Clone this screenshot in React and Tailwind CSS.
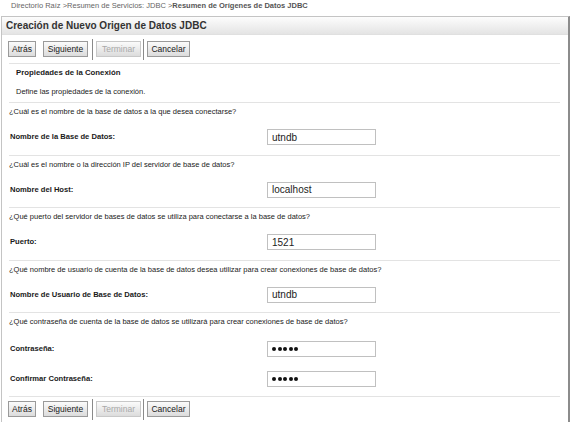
const FIELDS = [
  {
    question: "¿Cuál es el nombre de la base de datos a la que desea conectarse?",
    rows: [{ label: "Nombre de la Base de Datos:", value: "utndb" }],
  },
  {
    question: "¿Cuál es el nombre o la dirección IP del servidor de base de datos?",
    rows: [{ label: "Nombre del Host:", value: "localhost" }],
  },
  {
    question: "¿Qué puerto del servidor de bases de datos se utiliza para conectarse a la base de datos?",
    rows: [{ label: "Puerto:", value: "1521" }],
  },
  {
    question:
      "¿Qué nombre de usuario de cuenta de la base de datos desea utilizar para crear conexiones de base de datos?",
    rows: [{ label: "Nombre de Usuario de Base de Datos:", value: "utndb" }],
  },
  {
    question:
      "¿Qué contraseña de cuenta de la base de datos se utilizará para crear conexiones de base de datos?",
    rows: [
      { label: "Contraseña:", password: true },
      { label: "Confirmar Contraseña:", password: true },
    ],
  },
];

function Btn({ children, disabled, w }) {
  return (
    <div
      className={`${w} h-[16px] flex items-center justify-center border text-[8.5px] leading-none bg-gradient-to-b from-[#fbfbfb] to-[#dcdcdc] ${
        disabled ? "border-[#c8c8c8] text-[#a8a8a8]" : "border-[#9a9a9a] text-[#1a1a1a]"
      }`}
    >
      {children}
    </div>
  );
}

function ButtonBar() {
  return (
    <div className="flex items-center pl-[6px] h-[22px]">
      <Btn w="w-[28px]">Atrás</Btn>
      <div className="w-[7px]" />
      <Btn w="w-[45px]">Siguiente</Btn>
      <div className="w-px h-[21px] bg-[#8a8a8a] ml-[4px] mr-[3px]" />
      <Btn w="w-[45px]" disabled>
        Terminar
      </Btn>
      <div className="w-px h-[21px] bg-[#8a8a8a] ml-[2px] mr-[3px]" />
      <Btn w="w-[43px]">Cancelar</Btn>
    </div>
  );
}

function Rule() {
  return <div className="ml-[7px] mr-[8px] h-px bg-[#e3e3e3]" />;
}

function Dots() {
  return (
    <div className="flex gap-[1.5px]">
      {[0, 1, 2, 3, 4].map((d) => (
        <span key={d} className="w-[4px] h-[4px] rounded-full bg-[#111]" />
      ))}
    </div>
  );
}

export default function App() {
  return (
    <div className="w-[572px] h-[422px] overflow-hidden bg-white text-[#222] font-['Liberation_Sans',Arial,sans-serif]">
      {/* breadcrumb */}
      <div className="h-[16px] pl-[11px] pt-[1px] text-[7.5px] leading-[9px] text-[#666]">
        Directorio Raíz &gt;Resumen de Servicios: JDBC &gt;
        <span className="font-bold text-[#555]">Resumen de Orígenes de Datos JDBC</span>
      </div>

      <div className="ml-px w-[569px] h-[406px] border-l border-t border-[#c4c4c4] border-r-2 border-r-[#8c8c8c]">
        <div className="h-[18px] pl-[4px] flex items-center bg-gradient-to-b from-[#fdfdfd] to-[#e4e4e4] border-b border-[#e0e0e0] text-[10px] font-bold text-[#333]">
          Creación de Nuevo Origen de Datos JDBC
        </div>

        <div className="pt-[3px] pb-[3px]">
          <ButtonBar />
        </div>
        <Rule />

        <div className="pl-[14px] pt-[4px] h-[23px] text-[7.8px] leading-[10px] font-bold text-[#1a1a1a]">
          Propiedades de la Conexión
        </div>
        <div className="pl-[14px] h-[10px] text-[7.5px] leading-[10px] text-[#222]">
          Define las propiedades de la conexión.
        </div>
        <div className="h-[5px]" />
        <Rule />

        {FIELDS.map((f, i) => {
          const last = i === FIELDS.length - 1;
          return (
            <div key={i}>
              <div className="pl-[7px] pt-[4px] h-[14px] text-[7.5px] leading-[10px] text-[#222]">
                {f.question}
              </div>
              {f.rows.map((r, j) => (
                <div key={j} className={`flex items-center h-[16px] ${last ? "mt-[14px]" : "mt-[12px]"}`}>
                  <div className="w-[265px] pl-[8px] text-[7.6px] font-bold text-[#1a1a1a]">{r.label}</div>
                  <div className="w-[109px] h-[16px] border border-[#c0c0c0] pl-[4px] flex items-center text-[10px] text-[#222]">
                    {r.password ? <Dots /> : r.value}
                  </div>
                </div>
              ))}
              <div className={last ? "h-[9px]" : "h-[9.5px]"} />
              <Rule />
            </div>
          );
        })}

        <div className="pt-[1px]">
          <ButtonBar />
        </div>
      </div>
    </div>
  );
}
